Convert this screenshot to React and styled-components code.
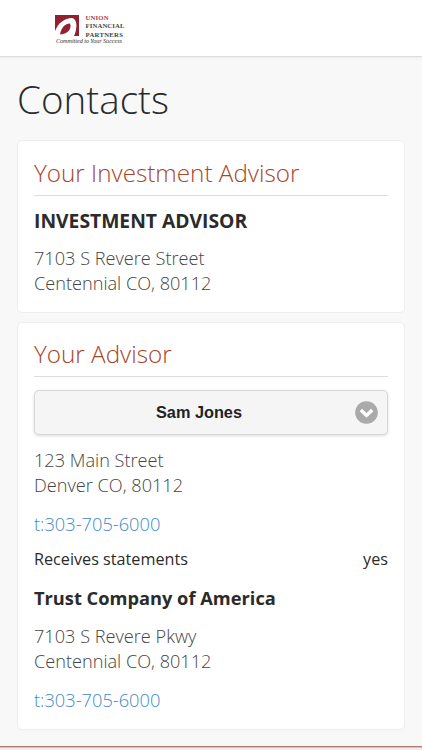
import React from 'react'
import styled, { createGlobalStyle } from 'styled-components'

const GlobalStyle = createGlobalStyle`
* {
    box-sizing: border-box;
}

body {
    margin: 0;
    background-color: #f8f8f8;
    color: #2b2b2b;
    font-family: "Open Sans", sans-serif;
}

h1, h2, h3, p {
    margin: 0;
}
`

const Page = styled.div`
height: 750px;
display: flex;
flex-direction: column;
overflow: hidden;
`

const Header = styled.header`
height: 57px;
flex: none;
padding: 14px 0 0 55px;
background-color: #ffffff;
border-bottom: 1px solid #dddddd;
box-shadow: 0 1px 2px rgba(0, 0, 0, 0.06);
`

const LogoSvg = styled.svg`
display: block;

text {
    font-family: "Liberation Serif", serif;
}
`

const Main = styled.main`
flex: 1;
padding: 0 17px;
`

const Title = styled.h1`
height: 83px;
padding-top: 15px;
font-size: 38.6px;
line-height: 54px;
font-weight: 300;
`

const Card = styled.section`
height: ${({ $height }) => $height}px;
margin-bottom: 9px;
padding: ${({ $top }) => $top || 15}px 16px 0;
background-color: #ffffff;
border: 1px solid #eeeeee;
border-radius: 5px;
`

const CardTitle = styled.h2`
height: 39px;
margin-bottom: 12px;
border-bottom: 1px solid #dddddd;
color: #a8452a;
font-size: 24.25px;
line-height: 32px;
font-weight: 300;
`

const Name = styled.h3`
margin-bottom: ${({ $gap }) => $gap || 13}px;
font-size: ${({ $size }) => $size || 18.25}px;
line-height: 26px;
font-weight: 700;
`

const Address = styled.p`
margin-bottom: 12px;
color: #444444;
font-size: 18.15px;
line-height: 25.5px;
font-weight: 300;
`

const Phone = styled.a`
display: block;
color: #428bca;
font-size: 18.25px;
line-height: 25.5px;
font-weight: 300;
`

const SelectButton = styled.button`
width: 100%;
height: 45px;
margin: 1px 0 12.5px;
padding: 0 9px 0 8px;
display: flex;
align-items: center;
background-color: #f5f5f5;
border: 1px solid #d8d8d8;
border-radius: 5px;
box-shadow: 0 1px 3px rgba(0, 0, 0, 0.15);
color: #222222;
font-family: "Liberation Sans", Arial, sans-serif;
font-size: 16.3px;
font-weight: 700;

${CardTitle} + & {
    margin-top: 13px;
}

span {
    flex: 1;
    text-align: center;
}
`

const Row = styled.div`
height: 24px;
margin: 10.5px 0 14px;
display: flex;
justify-content: space-between;
font-size: 16.2px;
line-height: 24px;
`

const Footer = styled.footer`
height: 4px;
flex: none;
background-color: #eeeeee;
border-top: 1px solid #b57a6e;
box-shadow: inset 0 1px 0 #efb8aa;
`

const Logo = () => (
    <LogoSvg width="72" height="32" viewBox="0 0 72 32">
        <rect x="0" y="1" width="24" height="21" fill="#92202f" />
        <path d="M0 17 C3 9 10 4 17 4 C23 5 22 16 19 22 L0 22 Z" fill="#ffffff" />
        <path d="M5 20.5 C6 14 10 9.5 15 9.5 C17 14 13.5 20 5 20.5 Z" fill="#92202f" />
        <text x="30.5" y="6.2" fontSize="6.7" fontWeight="700" fill="#a83c4a" textLength="23">UNION</text>
        <text x="30.5" y="14.4" fontSize="6.7" fontWeight="700" fill="#444444" textLength="39">FINANCIAL</text>
        <text x="30.5" y="22.6" fontSize="6.7" fontWeight="700" fill="#444444" textLength="37.5">PARTNERS</text>
        <text x="1" y="29" fontSize="6.2" fontStyle="italic" fill="#333333" textLength="66">Committed to Your Success</text>
    </LogoSvg>
)

const ArrowIcon = () => (
    <svg width="23" height="23" viewBox="0 0 23 23">
        <circle cx="11.5" cy="11.5" r="11.3" fill="#aaaaaa" />
        <path d="M5.8 8.9 L11.5 14.4 L17.2 8.9" fill="none" stroke="#ffffff" strokeWidth="3.5" />
    </svg>
)

const App = () => {
    return (
        <Page>
            <GlobalStyle />
            <Header>
                <Logo />
            </Header>

            <Main>
                <Title>Contacts</Title>

                <Card $height={173} $top={16}>
                    <CardTitle>Your Investment Advisor</CardTitle>
                    <Name $size={19.3} $gap={11.5}>INVESTMENT ADVISOR</Name>
                    <Address>7103 S Revere Street<br />Centennial CO, 80112</Address>
                </Card>

                <Card $height={408}>
                    <CardTitle>Your Advisor</CardTitle>
                    <SelectButton>
                        <span>Sam Jones</span>
                        <ArrowIcon />
                    </SelectButton>
                    <Address>123 Main Street<br />Denver CO, 80112</Address>
                    <Phone>t:303-705-6000</Phone>
                    <Row>
                        <span>Receives statements</span>
                        <span>yes</span>
                    </Row>
                    <Name>Trust Company of America</Name>
                    <Address>7103 S Revere Pkwy<br />Centennial CO, 80112</Address>
                    <Phone>t:303-705-6000</Phone>
                </Card>
            </Main>

            <Footer />
        </Page>
    )
}

export default App
